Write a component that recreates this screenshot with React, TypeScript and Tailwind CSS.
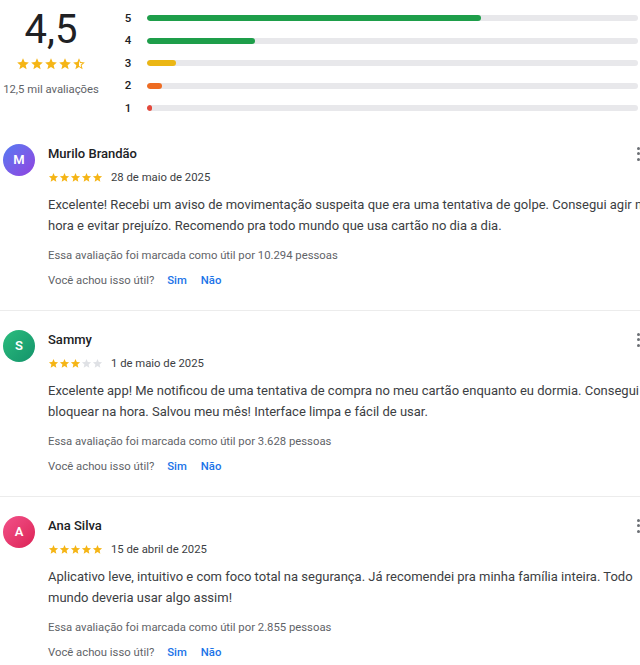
import React from 'react';

interface Review {
  name: string;
  initial: string;
  avatar: string;
  rating: number;
  date: string;
  text: string;
  helpful: string;
}

const STAR = 'M12 17.27L18.18 21l-1.64-7.03L22 9.24l-7.19-.61L12 2 9.19 8.63 2 9.24l5.46 4.73L5.82 21z';
const STAR_HALF =
  'M22 9.24l-7.19-.62L12 2 9.19 8.63 2 9.24l5.46 4.73L5.82 21 12 17.27 18.18 21l-1.63-7.03L22 9.24zM12 15.4V6.1l1.71 4.04 4.38.38-3.32 2.88 1 4.28L12 15.4z';

const bars = [
  { label: '5', pct: 68, color: 'bg-[#1e9e4a]' },
  { label: '4', pct: 22, color: 'bg-[#1e9e4a]' },
  { label: '3', pct: 6, color: 'bg-[#ebb614]' },
  { label: '2', pct: 3, color: 'bg-[#ee6c22]' },
  { label: '1', pct: 1, color: 'bg-[#e4483b]' },
];

const reviews: Review[] = [
  {
    name: 'Murilo Brandão',
    initial: 'M',
    avatar: 'bg-gradient-to-br from-[#4f7af2] to-[#8e3fe0]',
    rating: 5,
    date: '28 de maio de 2025',
    text: 'Excelente! Recebi um aviso de movimentação suspeita que era uma tentativa de golpe. Consegui agir na hora e evitar prejuízo. Recomendo pra todo mundo que usa cartão no dia a dia.',
    helpful: '10.294',
  },
  {
    name: 'Sammy',
    initial: 'S',
    avatar: 'bg-gradient-to-br from-[#2bbd7e] to-[#13936a]',
    rating: 3,
    date: '1 de maio de 2025',
    text: 'Excelente app! Me notificou de uma tentativa de compra no meu cartão enquanto eu dormia. Consegui bloquear na hora. Salvou meu mês! Interface limpa e fácil de usar.',
    helpful: '3.628',
  },
  {
    name: 'Ana Silva',
    initial: 'A',
    avatar: 'bg-gradient-to-br from-[#f2508a] to-[#dc1f55]',
    rating: 5,
    date: '15 de abril de 2025',
    text: 'Aplicativo leve, intuitivo e com foco total na segurança. Já recomendei pra minha família inteira. Todo mundo deveria usar algo assim!',
    helpful: '2.855',
  },
];

const Star: React.FC<{ size: number; filled?: boolean; half?: boolean }> = ({ size, filled = true, half }) => (
  <svg width={size} height={size} viewBox="0 0 24 24" className={filled || half ? 'fill-[#f5b516]' : 'fill-[#dfe1e5]'}>
    <path d={half ? STAR_HALF : STAR} />
  </svg>
);

const ReviewItem: React.FC<{ review: Review }> = ({ review }) => (
  <div className="flex gap-[13px] pl-[3px] pt-[19px] pb-[21px] border-b border-[#ececec]">
    <div
      className={`w-8 h-8 shrink-0 rounded-full flex items-center justify-center text-white text-[13px] font-semibold ${review.avatar}`}
    >
      {review.initial}
    </div>
    <div className="flex-1 min-w-0">
      <div className="flex items-center justify-between h-5">
        <span className="text-[13px] leading-5 font-medium text-[#202124]">{review.name}</span>
        <div className="w-8 flex flex-col items-center gap-[2.5px]">
          <span className="w-[3px] h-[3px] rounded-full bg-[#6b6f74]" />
          <span className="w-[3px] h-[3px] rounded-full bg-[#6b6f74]" />
          <span className="w-[3px] h-[3px] rounded-full bg-[#6b6f74]" />
        </div>
      </div>
      <div className="flex items-center h-4 mt-[6px]">
        <div className="flex">
          {[1, 2, 3, 4, 5].map(i => (
            <Star key={i} size={11} filled={i <= review.rating} />
          ))}
        </div>
        <span className="ml-[8px] text-[11.3px] leading-4 text-[#3c4043]">{review.date}</span>
      </div>
      <p className="mt-[8px] text-[13px] leading-[21px] text-[#3c4043]">{review.text}</p>
      <p className="mt-[12px] text-[11.3px] leading-4 text-[#5f6368]">
        Essa avaliação foi marcada como útil por {review.helpful} pessoas
      </p>
      <div className="mt-[9px] flex items-center text-[11.3px] leading-4">
        <span className="text-[#5f6368]">Você achou isso útil?</span>
        <span className="ml-[13px] font-medium text-[#1a73e8]">Sim</span>
        <span className="ml-[14px] font-medium text-[#1a73e8]">Não</span>
      </div>
    </div>
  </div>
);

const App: React.FC = () => {
  return (
    <div className="w-[640px] overflow-hidden bg-white font-[Roboto,sans-serif]">
      <div className="w-[654px]">
        <div className="flex pt-[7px]">
          <div className="w-[102px] flex flex-col items-center">
            <div className="mt-[3px] text-[40px] leading-[40px] text-[#202124]">4,5</div>
            <div className="mt-[7px] flex h-[14px] items-center">
              {[1, 2, 3, 4].map(i => (
                <Star key={i} size={14} />
              ))}
              <Star size={14} half />
            </div>
            <div className="mt-[11px] text-[11.3px] leading-4 text-[#5f6368]">12,5 mil avaliações</div>
          </div>
          <div className="ml-[18px] flex flex-col">
            {bars.map(bar => (
              <div key={bar.label} className="flex items-center h-[22.5px]">
                <span className="w-4 text-center text-[11.5px] font-medium text-[#202124]">{bar.label}</span>
                <div className="ml-[11px] w-[491px] h-[6px] rounded-full bg-[#e8e8eb] overflow-hidden">
                  <div className={`h-full rounded-full ${bar.color}`} style={{ width: `${bar.pct}%` }} />
                </div>
              </div>
            ))}
          </div>
        </div>
        <div className="mt-[5px]">
          {reviews.map(r => (
            <ReviewItem key={r.name} review={r} />
          ))}
        </div>
      </div>
    </div>
  );
};

export default App;
